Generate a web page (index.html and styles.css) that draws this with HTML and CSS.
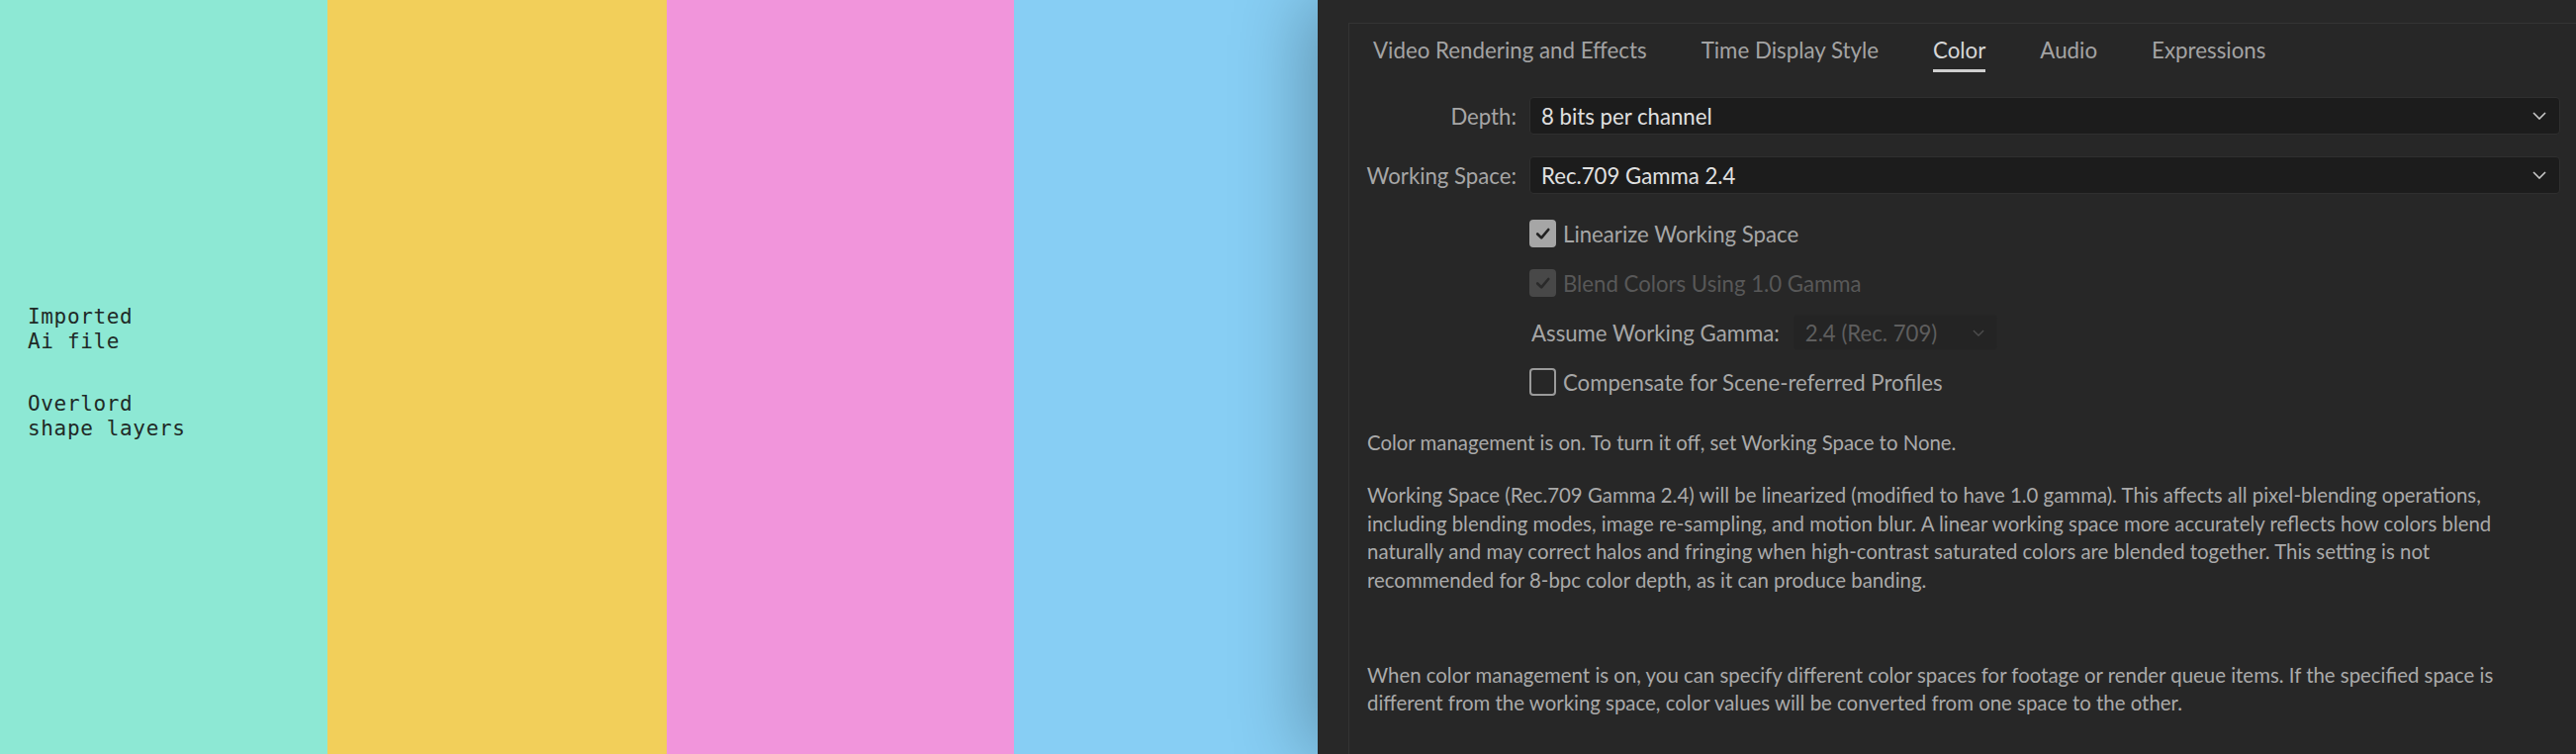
FILE: index.html
```html
<!DOCTYPE html>
<html lang="en">
<head>
<meta charset="utf-8">
<title>Color settings</title>
<link rel="stylesheet" href="styles.css">
</head>
<body>
<div class="canvas">
  <div class="stripe teal">
    <div class="notes">
      <p class="note">Imported<br>Ai file</p>
      <p class="note">Overlord<br>shape layers</p>
    </div>
  </div>
  <div class="stripe yellow"></div>
  <div class="stripe pink"></div>
  <div class="stripe blue"></div>
</div>
<div class="panel">
  <div class="box">
    <nav class="tabs">
      <span class="tab">Video Rendering and Effects</span>
      <span class="tab">Time Display Style</span>
      <span class="tab active">Color</span>
      <span class="tab">Audio</span>
      <span class="tab">Expressions</span>
    </nav>
    <div class="form">
      <label class="label">Depth:</label>
      <div class="select"><span>8 bits per channel</span><svg class="chev" viewBox="0 0 14 8" width="14" height="8"><polyline points="1,1 7,7 13,1"/></svg></div>
      <label class="label">Working Space:</label>
      <div class="select"><span>Rec.709 Gamma 2.4</span><svg class="chev" viewBox="0 0 14 8" width="14" height="8"><polyline points="1,1 7,7 13,1"/></svg></div>
    </div>
    <div class="options">
      <div class="opt">
        <span class="cb checked"><svg viewBox="0 0 26 26" width="26" height="26"><polyline points="7,13.5 11.5,18 19.5,8.5"/></svg></span>
        <span class="opt-text">Linearize Working Space</span>
      </div>
      <div class="opt disabled">
        <span class="cb checked"><svg viewBox="0 0 26 26" width="26" height="26"><polyline points="7,13.5 11.5,18 19.5,8.5"/></svg></span>
        <span class="opt-text">Blend Colors Using 1.0 Gamma</span>
      </div>
      <div class="opt">
        <span class="gamma-label">Assume Working Gamma:</span>
        <div class="select small"><span>2.4 (Rec. 709)</span><svg class="chev" viewBox="0 0 14 8" width="12" height="7"><polyline points="1,1 7,7 13,1"/></svg></div>
      </div>
      <div class="opt">
        <span class="cb"></span>
        <span class="opt-text">Compensate for Scene-referred Profiles</span>
      </div>
    </div>
    <div class="info">
      <p class="para first">Color management is on. To turn it off, set Working Space to None.</p>
      <p class="para">Working Space (Rec.709 Gamma 2.4) will be linearized (modified to have 1.0 gamma). This affects all pixel-blending operations,<br>including blending modes, image re-sampling, and motion blur. A linear working space more accurately reflects how colors blend<br>naturally and may correct halos and fringing when high-contrast saturated colors are blended together. This setting is not<br>recommended for 8-bpc color depth, as it can produce banding.</p>
      <p class="para last">When color management is on, you can specify different color spaces for footage or render queue items. If the specified space is<br>different from the working space, color values will be converted from one space to the other.</p>
    </div>
  </div>
</div>
</body>
</html>
```

FILE: styles.css
```css
html, body {
  margin: 0;
  padding: 0;
}
body {
  width: 2604px;
  height: 762px;
  overflow: hidden;
  display: flex;
  font-family: "Lato", "Open Sans", sans-serif;
  background: #282828;
}
.canvas {
  flex: 0 0 1332px;
  display: flex;
  height: 762px;
}
.stripe { height: 100%; }
.teal { flex: 0 0 331px; background: #8de8d4; }
.yellow { flex: 0 0 343px; background: #f2cf5a; }
.pink { flex: 0 0 351px; background: #f195db; }
.blue { flex: 0 0 307px; background: #87cef4; }

.notes {
  padding: 308px 0 0 28px;
}
.note {
  margin: 0 0 38px;
  font-family: "DejaVu Sans Mono", "Liberation Mono", monospace;
  font-size: 21px;
  line-height: 25px;
  letter-spacing: 0.65px;
  color: #1f2a27;
}

.panel {
  flex: 1;
  position: relative;
  z-index: 1;
  background: #282828;
  box-shadow: -12px 0 70px rgba(0, 0, 0, 0.28);
  padding: 23px 0 0 31px;
  display: flex;
}
.box {
  flex: 1;
  border-top: 1px solid #343434;
  border-left: 1px solid #343434;
  background: #272727;
  padding: 0 16px 0 0;
}

.tabs {
  display: flex;
  gap: 55px;
  padding: 13px 0 0 24px;
}
.tab {
  font-size: 22.3px;
  line-height: 28px;
  color: #a3a3a3;
  padding-bottom: 5px;
  border-bottom: 3px solid transparent;
  white-space: nowrap;
}
.tab.active {
  color: #d6d6d6;
  border-bottom-color: #cfcfcf;
}

.form {
  display: grid;
  grid-template-columns: 169px 1fr;
  column-gap: 13px;
  row-gap: 22px;
  margin-top: 25px;
  align-items: center;
}
.label {
  text-align: right;
  font-size: 22.2px;
  color: #a6a6a6;
  white-space: nowrap;
}
.select {
  height: 38px;
  box-sizing: border-box;
  border: 1px solid #2f2f2f;
  border-radius: 4px;
  background: #1c1c1c;
  display: flex;
  align-items: center;
  justify-content: space-between;
  padding: 0 13px 0 11px;
  font-size: 22.2px;
  color: #e0e0e0;
}
.chev polyline {
  fill: none;
  stroke: #c8c8c8;
  stroke-width: 1.6;
}

.options {
  margin: 15px 0 0 182px;
}
.opt {
  height: 50px;
  display: flex;
  align-items: center;
  font-size: 22.2px;
  color: #a6a6a6;
  white-space: nowrap;
}
.cb {
  width: 27px;
  height: 28px;
  box-sizing: border-box;
  border: 2px solid #9a9a9a;
  border-radius: 4px;
  margin-right: 7px;
  display: flex;
  align-items: center;
  justify-content: center;
}
.cb.checked {
  background: #a6a6a6;
  border-color: #a6a6a6;
}
.cb svg polyline {
  fill: none;
  stroke: #222;
  stroke-width: 3;
  stroke-linecap: round;
  stroke-linejoin: round;
}
.opt.disabled { color: #585858; }
.opt.disabled .cb.checked {
  background: #484848;
  border-color: #484848;
}
.opt.disabled .cb svg polyline { stroke: #2a2a2a; }
.gamma-label {
  margin-left: 2px;
  margin-right: 14px;
}
.select.small {
  width: 206px;
  height: 36px;
  background: #242424;
  border-color: #252525;
  color: #5e5e5e;
  padding: 0 12px 0 11px;
}
.select.small .chev polyline { stroke: #4c4c4c; }

.info {
  padding: 22px 0 0 18px;
}
.para {
  margin: 0;
  font-size: 20.4px;
  line-height: 28.4px;
  color: #aaaaaa;
  white-space: nowrap;
}
.para.first { margin-bottom: 25px; }
.para.last { margin-top: 68px; }
```
